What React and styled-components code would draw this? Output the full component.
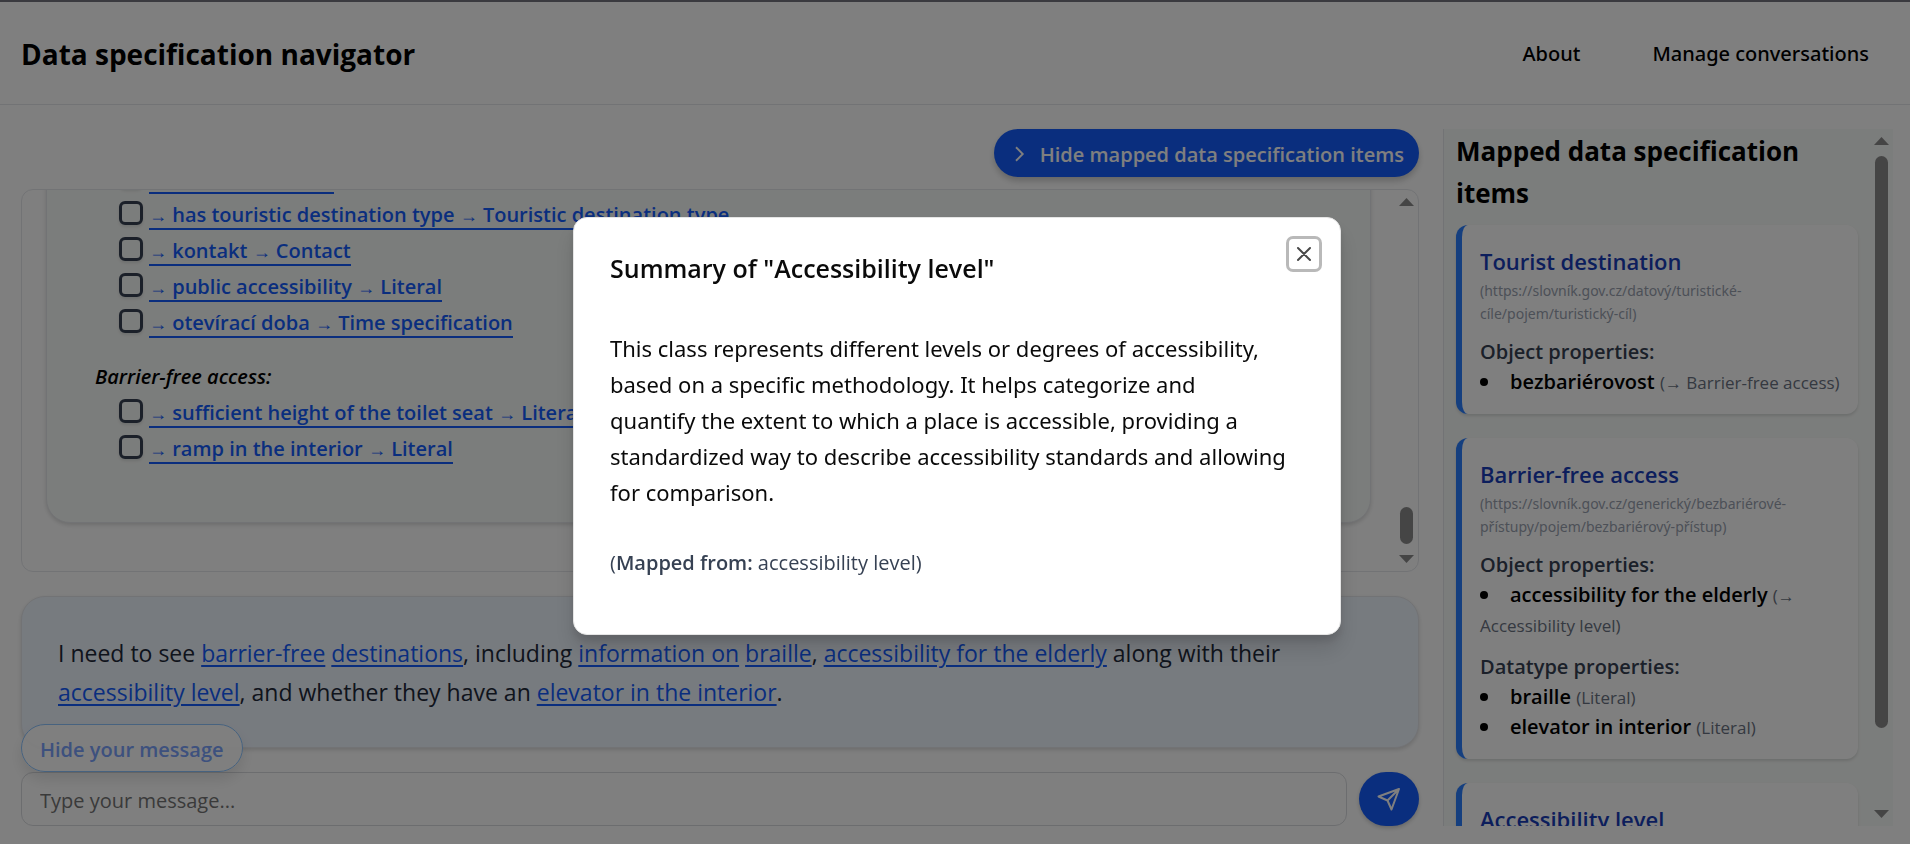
import React from "react";
import styled, { createGlobalStyle } from "styled-components";

const GlobalStyle = createGlobalStyle`
  *, *::before, *::after { box-sizing: border-box; }
  body {
    margin: 0;
    color: #000;
    background: #fff;
    font-family: "Open Sans", "Noto Sans", "DejaVu Sans", sans-serif;
    font-size: 20px;
  }
  h1, h2, h3, h4, p, ul { margin: 0; padding: 0; }
  ul { list-style: none; }
  button, input { font: inherit; }
`;

const Page = styled.div`
  height: 100vh;
  display: flex;
  flex-direction: column;
  border-top: 2px solid #74747f;
  overflow: hidden;
`;

const Header = styled.header`
  display: flex;
  align-items: center;
  justify-content: space-between;
  height: 103px;
  padding: 2px 41px 0 21px;
  border-bottom: 1px solid #e5e7eb;
`;

const Brand = styled.h1`
  font-size: 28px;
  line-height: 36px;
  font-weight: 700;
`;

const Nav = styled.nav`
  display: flex;
  gap: 72px;
`;

const NavLink = styled.a`
  color: #000;
  font-family: "Noto Sans", sans-serif;
  font-weight: 500;
  line-height: 30px;
  text-decoration: none;
`;

const Main = styled.main`
  flex: 1;
  min-height: 0;
  display: flex;
  gap: 24px;
  padding: 24px 17px 18px 21px;
`;

const Chat = styled.section`
  flex: 1;
  min-width: 0;
  display: flex;
  flex-direction: column;
`;

const ToggleButton = styled.button`
  align-self: flex-end;
  display: flex;
  align-items: center;
  gap: 12px;
  height: 48px;
  padding: 2px 15px 0 16px;
  margin-bottom: 12px;
  border: 0;
  border-radius: 24px;
  background: #155dfc;
  color: #fff;
  font-weight: 600;
  box-shadow: 0 4px 6px rgba(0, 0, 0, 0.2);
`;

const History = styled.div`
  flex: 1;
  min-height: 0;
  display: flex;
  border: 1px solid #e5e7eb;
  border-radius: 12px;
  overflow: hidden;
`;

const HistoryContent = styled.div`
  flex: 1;
  display: flex;
  flex-direction: column;
  justify-content: flex-end;
  padding: 0 23px 48px 24px;
`;

const Bubble = styled.article`
  padding: 56px 48px;
  border: 1px solid #e5e7eb;
  border-radius: 24px;
  background: #f7faf8;
  box-shadow: 0 2px 4px rgba(0, 0, 0, 0.15);
`;

const Group = styled.section`
  & + & { margin-top: 18px; }
`;

const GroupTitle = styled.h3`
  height: 36px;
  font-size: 20px;
  line-height: 38px;
  font-weight: 600;
  font-style: italic;
`;

const OptionRow = styled.li`
  display: flex;
  align-items: flex-start;
  gap: 6px;
  height: 36px;
  padding-left: 24px;
`;

const Checkbox = styled.input`
  appearance: none;
  width: 24px;
  height: 24px;
  margin: 5px 0 0;
  border: 3px solid #364153;
  border-radius: 6px;
  box-shadow: 0 2px 3px rgba(0, 0, 0, 0.1);
`;

const Arrow = styled.span`
  font-family: "Liberation Sans", sans-serif;
  font-weight: 400;
  line-height: 1;
`;

const OptionLink = styled.a`
  color: #155dfc;
  font-weight: 600;
  height: 34px;
  line-height: 38px;
  border-bottom: 2px solid #155dfc;
  text-decoration: none;
  ${Arrow} { font-size: 18px; }
`;

const Track = styled.div`
  flex: none;
  display: flex;
  flex-direction: column;
  align-items: center;
  justify-content: space-between;
  width: 24px;
  padding: 8px 0;
`;

const Thumb = styled.div`
  width: 13px;
  height: ${(p) => p.$length};
  margin: ${(p) => (p.$atEnd ? "auto 0 11px" : "11px 0 auto")};
  border-radius: 7px;
  background: #8b8b8b;
`;

const UserMessage = styled.div`
  margin-top: 24px;
  padding: 37px 36px 35px;
  border: 1px solid #e5e7eb;
  border-radius: 24px;
  background: #eff6ff;
  color: #1e2939;
  font-size: 23px;
  line-height: 39px;
  box-shadow: 0 2px 4px rgba(0, 0, 0, 0.15);
`;

const Mention = styled.a`
  color: #155dfc;
  text-decoration: underline;
  text-decoration-thickness: 2px;
  text-underline-offset: 3px;
`;

const HideButton = styled.button`
  align-self: flex-start;
  position: relative;
  height: 48px;
  margin: -24px 0 0;
  padding: 2px 18px 0;
  border: 1px solid #8ec5ff;
  border-radius: 24px;
  background: rgba(255, 255, 255, 0.9);
  color: #7ba2fc;
  font-weight: 600;
  box-shadow: 0 8px 14px rgba(0, 0, 0, 0.1);
`;

const Composer = styled.form`
  display: flex;
  gap: 12px;
  height: 54px;
`;

const MessageInput = styled.input`
  flex: 1;
  min-width: 0;
  padding: 2px 18px 0;
  border: 1px solid #d9dbdf;
  border-radius: 12px;
  background: transparent;
  &::placeholder { color: #757575; opacity: 1; }
`;

const SendButton = styled.button`
  display: flex;
  align-items: center;
  justify-content: center;
  width: 60px;
  padding: 0;
  border: 0;
  border-radius: 27px;
  background: #155dfc;
  color: #fff;
  box-shadow: 0 2px 4px rgba(0, 0, 0, 0.2);
`;

const Sidebar = styled.aside`
  flex: none;
  display: flex;
  width: 450px;
  border-left: 1px solid #e5e7eb;
  background: #f7faf8;
  overflow: hidden;
`;

const SidebarContent = styled.div`
  flex: 1;
  min-width: 0;
  padding: 1px 11px 0 12px;
`;

const SidebarTitle = styled.h2`
  font-size: 26px;
  line-height: 42px;
  font-weight: 700;
  margin-bottom: 11px;
`;

const Card = styled.article`
  padding: 18px 18px 17px;
  margin-bottom: 24px;
  border-left: 6px solid #2b7fff;
  border-radius: 12px;
  background: #fff;
  box-shadow: 0 2px 3px rgba(0, 0, 0, 0.12);
`;

const CardTitle = styled.h3`
  color: #193cb8;
  font-size: 22px;
  line-height: 36px;
  font-weight: 600;
`;

const CardUrl = styled.p`
  color: #99a1af;
  font-family: "Noto Sans", sans-serif;
  font-size: 14px;
  line-height: 23px;
`;

const PropertyTitle = styled.h4`
  margin-top: 12px;
  color: #364153;
  font-size: 20px;
  line-height: 30px;
  font-weight: 600;
`;

const Property = styled.li`
  line-height: 30px;
  &::before {
    content: "";
    display: inline-block;
    width: 8px;
    height: 8px;
    margin-right: 22px;
    border-radius: 50%;
    background: #000;
    vertical-align: 3px;
  }
`;

const PropertyName = styled.span`
  font-weight: 600;
`;

const PropertyTarget = styled.span`
  color: #6a7282;
  font-size: 17px;
  line-height: 20px;
`;

const Overlay = styled.div`
  position: fixed;
  inset: 0;
  display: flex;
  align-items: center;
  justify-content: center;
  padding: 8px 0 0 4px;
  background: rgba(0, 0, 0, 0.5);
`;

const Modal = styled.section`
  position: relative;
  width: 768px;
  padding: 30px 36px 56px;
  border: 1px solid #e5e5e5;
  border-radius: 14px;
  background: #fff;
  color: #0a0a0a;
  box-shadow: 0 15px 22px rgba(0, 0, 0, 0.12), 0 6px 9px rgba(0, 0, 0, 0.1);
`;

const ModalTitle = styled.h2`
  font-size: 25px;
  line-height: 40px;
  font-weight: 600;
`;

const ModalText = styled.p`
  margin-top: 42px;
  font-family: "Noto Sans", sans-serif;
  font-size: 22px;
  line-height: 36px;
`;

const MappedFrom = styled.p`
  margin-top: 38px;
  color: #364153;
  font-size: 20px;
  line-height: 30px;
  & strong { font-weight: 600; }
`;

const CloseButton = styled.button`
  position: absolute;
  top: 21px;
  right: 21px;
  display: flex;
  align-items: center;
  justify-content: center;
  width: 30px;
  height: 30px;
  padding: 0;
  border: 0;
  border-radius: 4px;
  background: #fff;
  color: #484848;
  box-shadow: 0 0 0 3px #b9b9b9;
`;

const ArrowUp = () => (
  <svg width="15" height="8" viewBox="0 0 15 8" aria-hidden="true"><path d="M0 8L7.500 0L15 8Z" fill="#8b8b8b" /></svg>
);
const ArrowDown = () => (
  <svg width="15" height="8" viewBox="0 0 15 8" aria-hidden="true"><path d="M0 0L7.500 8L15 0Z" fill="#8b8b8b" /></svg>
);

function Scrollbar({ length, atEnd }) {
  return (
    <Track>
      <ArrowUp />
      <Thumb $length={length} $atEnd={atEnd} />
      <ArrowDown />
    </Track>
  );
}

function withArrows(text) {
  return text.split("→").map((part, i) => (
    <React.Fragment key={i}>
      {i > 0 && <Arrow>→</Arrow>}
      {part}
    </React.Fragment>
  ));
}

const groups = [
  {
    id: "destination",
    options: [
      "→ contact → Literal",
      "→ has touristic destination type → Touristic destination type",
      "→ kontakt → Contact",
      "→ public accessibility → Literal",
      "→ otevírací doba → Time specification",
    ],
  },
  {
    id: "access",
    title: "Barrier-free access:",
    options: ["→ sufficient height of the toilet seat → Literal", "→ ramp in the interior → Literal"],
  },
];

const cards = [
  {
    title: "Tourist destination",
    url: "(https://slovník.gov.cz/datový/turistické-cíle/pojem/turistický-cíl)",
    sections: [{ title: "Object properties:", items: [["bezbariérovost", "(→ Barrier-free access)"]] }],
  },
  {
    title: "Barrier-free access",
    url: "(https://slovník.gov.cz/generický/bezbariérové-přístupy/pojem/bezbariérový-přístup)",
    sections: [
      { title: "Object properties:", items: [["accessibility for the elderly", "(→ Accessibility level)"]] },
      { title: "Datatype properties:", items: [["braille", "(Literal)"], ["elevator in interior", "(Literal)"]] },
    ],
  },
  { title: "Accessibility level", url: "", sections: [] },
];

export default function App() {
  return (
    <>
      <GlobalStyle />
      <Page>
        <Header>
          <Brand>Data specification navigator</Brand>
          <Nav>
            <NavLink href="#about">About</NavLink>
            <NavLink href="#conversations">Manage conversations</NavLink>
          </Nav>
        </Header>
        <Main>
          <Chat>
            <ToggleButton type="button">
              <svg width="18" height="18" viewBox="0 0 24 24" fill="none" stroke="currentColor" strokeWidth="2.500" aria-hidden="true">
                <path d="M8 3l9 9-9 9" />
              </svg>
              Hide mapped data specification items
            </ToggleButton>
            <History>
              <HistoryContent>
                <Bubble>
                  {groups.map((group) => (
                    <Group key={group.id}>
                      {group.title && <GroupTitle>{group.title}</GroupTitle>}
                      <ul>
                        {group.options.map((option) => (
                          <OptionRow key={option}>
                            <Checkbox type="checkbox" aria-label={option} />
                            <OptionLink href="#item">{withArrows(option)}</OptionLink>
                          </OptionRow>
                        ))}
                      </ul>
                    </Group>
                  ))}
                </Bubble>
              </HistoryContent>
              <Scrollbar length="37px" atEnd />
            </History>
            <UserMessage>
              I need to see <Mention href="#m">barrier-free</Mention> <Mention href="#m">destinations</Mention>, including{" "}
              <Mention href="#m">information on</Mention> <Mention href="#m">braille</Mention>,{" "}
              <Mention href="#m">accessibility for the elderly</Mention> along with their{" "}
              <Mention href="#m">accessibility level</Mention>, and whether they have an{" "}
              <Mention href="#m">elevator in the interior</Mention>.
            </UserMessage>
            <HideButton type="button">Hide your message</HideButton>
            <Composer>
              <MessageInput type="text" aria-label="Message" placeholder="Type your message..." />
              <SendButton type="button" aria-label="Send">
                <svg width="24" height="24" viewBox="0 0 24 24" fill="none" stroke="currentColor" strokeWidth="2" strokeLinejoin="round" aria-hidden="true">
                  <path d="M22 2L1.500 9.500L10.500 13.500L14.500 22.500ZM22 2L10.500 13.500" />
                </svg>
              </SendButton>
            </Composer>
          </Chat>
          <Sidebar>
            <SidebarContent>
              <SidebarTitle>Mapped data specification items</SidebarTitle>
              {cards.map((card) => (
                <Card key={card.title}>
                  <CardTitle>{card.title}</CardTitle>
                  <CardUrl>{card.url}</CardUrl>
                  {card.sections.map((section) => (
                    <section key={section.title}>
                      <PropertyTitle>{section.title}</PropertyTitle>
                      <ul>
                        {section.items.map(([name, target]) => (
                          <Property key={name}>
                            <PropertyName>{name}</PropertyName> <PropertyTarget>{withArrows(target)}</PropertyTarget>
                          </Property>
                        ))}
                      </ul>
                    </section>
                  ))}
                </Card>
              ))}
            </SidebarContent>
            <Scrollbar length="572px" />
          </Sidebar>
        </Main>
      </Page>
      <Overlay>
        <Modal role="dialog" aria-modal="true" aria-labelledby="summary-title">
          <ModalTitle id="summary-title">Summary of "Accessibility level"</ModalTitle>
          <ModalText>
            This class represents different levels or degrees of accessibility,
            <br />
            based on a specific methodology. It helps categorize and
            <br />
            quantify the extent to which a place is accessible, providing a
            <br />
            standardized way to describe accessibility standards and allowing
            <br />
            for comparison.
          </ModalText>
          <MappedFrom>
            (<strong>Mapped from:</strong> accessibility level)
          </MappedFrom>
          <CloseButton type="button" aria-label="Close">
            <svg width="24" height="24" viewBox="0 0 24 24" fill="none" stroke="currentColor" strokeWidth="2" strokeLinecap="round" aria-hidden="true">
              <path d="M6 6l12 12M18 6L6 18" />
            </svg>
          </CloseButton>
        </Modal>
      </Overlay>
    </>
  );
}
